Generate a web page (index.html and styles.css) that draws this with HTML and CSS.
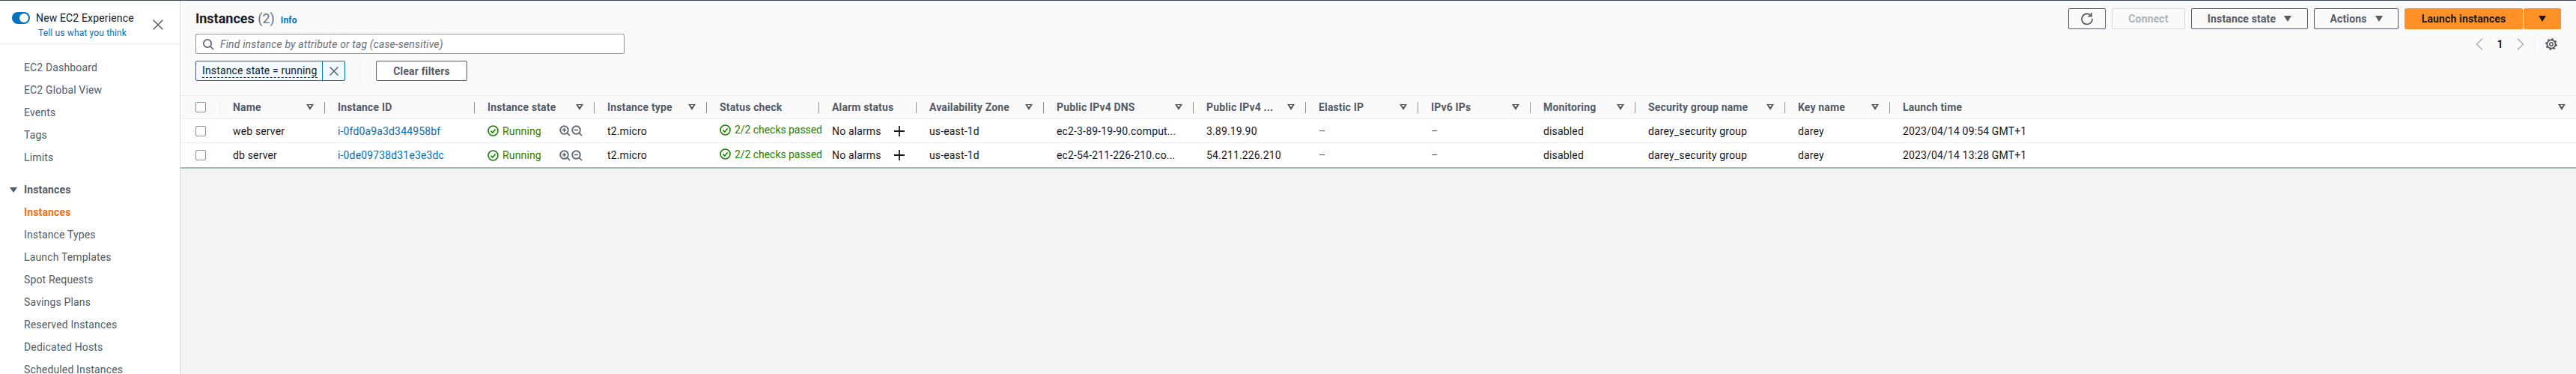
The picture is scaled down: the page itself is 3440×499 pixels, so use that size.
FILE: index.html
```html
<!DOCTYPE html>
<html lang="en">
<head>
    <meta charset="UTF-8">
    <title>Instances | EC2 Management Console</title>
    <link rel="stylesheet" href="styles.css">
</head>
<body>
    <aside class="sidebar">
        <div class="experience">
            <div class="toggle"></div>
            <div class="experience-text">
                <div class="experience-title">New EC2 Experience</div>
                <a class="experience-link">Tell us what you think</a>
            </div>
            <svg class="close" width="14" height="14" viewBox="0 0 14 14"><path d="M0.7 0.7 13.3 13.3M13.3 0.7 0.7 13.3" stroke="#545b64" stroke-width="1.5" fill="none"/></svg>
        </div>
        <ul class="nav nav-top">
            <li>EC2 Dashboard</li>
            <li>EC2 Global View</li>
            <li>Events</li>
            <li>Tags</li>
            <li>Limits</li>
        </ul>
        <div class="nav-heading"><span class="nav-caret"></span>Instances</div>
        <ul class="nav">
            <li class="active">Instances</li>
            <li>Instance Types</li>
            <li>Launch Templates</li>
            <li>Spot Requests</li>
            <li>Savings Plans</li>
            <li>Reserved Instances</li>
            <li>Dedicated Hosts</li>
            <li>Scheduled Instances</li>
        </ul>
    </aside>

    <main class="main">
        <div class="panel-head">
            <div class="head-left">
                <div class="title-row">
                    <h1>Instances <span class="count">(2)</span></h1>
                    <a class="info">Info</a>
                </div>
                <div class="search">
                    <svg width="16" height="16" viewBox="0 0 16 16"><circle cx="7" cy="7" r="5.2" stroke="#545b64" stroke-width="1.6" fill="none"/><path d="M10.8 10.8 15 15" stroke="#545b64" stroke-width="1.6" fill="none"/></svg>
                    <span>Find instance by attribute or tag (case-sensitive)</span>
                </div>
                <div class="filter-row">
                    <div class="chip">
                        <span class="chip-label"><span>Instance state = running</span></span>
                        <span class="chip-x"><svg width="12" height="12" viewBox="0 0 12 12"><path d="M0.6 0.6 11.4 11.4M11.4 0.6 0.6 11.4" stroke="#545b64" stroke-width="1.4" fill="none"/></svg></span>
                    </div>
                    <div class="filter-sep"></div>
                    <button class="btn btn-clear">Clear filters</button>
                </div>
            </div>
            <div class="head-right">
                <div class="toolbar">
                    <button class="btn btn-refresh">
                        <svg width="18" height="18" viewBox="0 0 18 18"><path d="M14.6 5.2A7 7 0 1 0 16 9" stroke="#545b64" stroke-width="1.7" fill="none"/><path d="M15 1v4.6h-4.6" stroke="#545b64" stroke-width="1.7" fill="none"/></svg>
                    </button>
                    <button class="btn btn-connect" disabled>Connect</button>
                    <button class="btn btn-state">Instance state<span class="caret"></span></button>
                    <button class="btn btn-actions">Actions<span class="caret"></span></button>
                    <div class="launch">
                        <button class="btn-launch">Launch instances</button>
                        <button class="btn-launch-caret"><span class="caret caret-dark"></span></button>
                    </div>
                </div>
                <div class="pager">
                    <svg width="10" height="16" viewBox="0 0 10 16"><path d="M9 0.7 1.5 8 9 15.3" stroke="#aab7b8" stroke-width="1.7" fill="none"/></svg>
                    <span class="page-num">1</span>
                    <svg width="10" height="16" viewBox="0 0 10 16"><path d="M1 0.7 8.5 8 1 15.3" stroke="#aab7b8" stroke-width="1.7" fill="none"/></svg>
                    <span class="pager-sep"></span>
                    <svg class="gear" width="16" height="16" viewBox="0 0 16 16"><circle cx="8" cy="8" r="5.6" stroke="#545b64" stroke-width="1.8" fill="none"/><circle cx="8" cy="8" r="7" stroke="#545b64" stroke-width="1.8" stroke-dasharray="2.6 2.9" fill="none"/><circle cx="8" cy="8" r="2.2" stroke="#545b64" stroke-width="1.6" fill="none"/></svg>
                </div>
            </div>
        </div>

        <table class="instances">
            <colgroup>
                <col class="w53"><col class="w140"><col class="w200"><col class="w160"><col class="w150"><col class="w150"><col class="w130"><col class="w170"><col class="w200"><col class="w150"><col class="w150"><col class="w150"><col class="w140"><col class="w200"><col class="w140"><col>
            </colgroup>
            <thead>
                <tr>
                    <th class="check-cell"><div class="check-wrap"><span class="check"></span></div></th>
                    <th><div class="th-in"><span class="th-text">Name</span><span class="sort"></span></div></th>
                    <th><div class="th-in"><span class="th-text">Instance ID</span></div></th>
                    <th><div class="th-in"><span class="th-text">Instance state</span><span class="sort"></span></div></th>
                    <th><div class="th-in"><span class="th-text">Instance type</span><span class="sort"></span></div></th>
                    <th><div class="th-in"><span class="th-text">Status check</span></div></th>
                    <th><div class="th-in"><span class="th-text">Alarm status</span></div></th>
                    <th><div class="th-in"><span class="th-text">Availability Zone</span><span class="sort"></span></div></th>
                    <th><div class="th-in"><span class="th-text">Public IPv4 DNS</span><span class="sort"></span></div></th>
                    <th><div class="th-in"><span class="th-text">Public IPv4 ...</span><span class="sort"></span></div></th>
                    <th><div class="th-in"><span class="th-text">Elastic IP</span><span class="sort"></span></div></th>
                    <th><div class="th-in"><span class="th-text">IPv6 IPs</span><span class="sort"></span></div></th>
                    <th><div class="th-in"><span class="th-text">Monitoring</span><span class="sort"></span></div></th>
                    <th><div class="th-in"><span class="th-text">Security group name</span><span class="sort"></span></div></th>
                    <th><div class="th-in"><span class="th-text">Key name</span><span class="sort"></span></div></th>
                    <th><div class="th-in th-last"><span class="th-text">Launch time</span><span class="sort"></span></div></th>
                </tr>
            </thead>
            <tbody>
                <tr>
                    <td class="check-cell"><span class="check"></span></td>
                    <td>web server</td>
                    <td><a class="link">i-0fd0a9a3d344958bf</a></td>
                    <td>
                        <div class="state">
                            <span class="ok"><svg width="15" height="15" viewBox="0 0 15 15"><circle cx="7.5" cy="7.5" r="6.5" stroke="#1d8102" stroke-width="1.6" fill="none"/><path d="M4.5 7.6 6.8 10 10.6 5.4" stroke="#1d8102" stroke-width="1.6" fill="none"/></svg>Running</span>
                            <span class="zoom-icons">
                                <svg width="15" height="15" viewBox="0 0 15 15"><circle cx="6.5" cy="6.5" r="5.3" stroke="#687078" stroke-width="2" fill="none"/><path d="M4 6.5h5M6.5 4v5M10.5 10.5 14 14" stroke="#545b64" stroke-width="1.6" fill="none"/></svg>
                                <svg width="15" height="15" viewBox="0 0 15 15"><circle cx="6.5" cy="6.5" r="5.3" stroke="#687078" stroke-width="2" fill="none"/><path d="M4 6.5h5M10.5 10.5 14 14" stroke="#545b64" stroke-width="1.6" fill="none"/></svg>
                            </span>
                        </div>
                    </td>
                    <td>t2.micro</td>
                    <td class="tight"><span class="ok"><svg width="15" height="15" viewBox="0 0 15 15"><circle cx="7.5" cy="7.5" r="6.5" stroke="#1d8102" stroke-width="1.6" fill="none"/><path d="M4.5 7.6 6.8 10 10.6 5.4" stroke="#1d8102" stroke-width="1.6" fill="none"/></svg>2/2 checks passed</span></td>
                    <td><div class="alarm">No alarms<svg width="14" height="14" viewBox="0 0 14 14"><path d="M7 0v14M0 7h14" stroke="#16191f" stroke-width="1.8" fill="none"/></svg></div></td>
                    <td>us-east-1d</td>
                    <td>ec2-3-89-19-90.comput...</td>
                    <td>3.89.19.90</td>
                    <td class="muted">–</td>
                    <td class="muted">–</td>
                    <td>disabled</td>
                    <td>darey_security group</td>
                    <td>darey</td>
                    <td>2023/04/14 09:54 GMT+1</td>
                </tr>
                <tr>
                    <td class="check-cell"><span class="check"></span></td>
                    <td>db server</td>
                    <td><a class="link">i-0de09738d31e3e3dc</a></td>
                    <td>
                        <div class="state">
                            <span class="ok"><svg width="15" height="15" viewBox="0 0 15 15"><circle cx="7.5" cy="7.5" r="6.5" stroke="#1d8102" stroke-width="1.6" fill="none"/><path d="M4.5 7.6 6.8 10 10.6 5.4" stroke="#1d8102" stroke-width="1.6" fill="none"/></svg>Running</span>
                            <span class="zoom-icons">
                                <svg width="15" height="15" viewBox="0 0 15 15"><circle cx="6.5" cy="6.5" r="5.3" stroke="#687078" stroke-width="2" fill="none"/><path d="M4 6.5h5M6.5 4v5M10.5 10.5 14 14" stroke="#545b64" stroke-width="1.6" fill="none"/></svg>
                                <svg width="15" height="15" viewBox="0 0 15 15"><circle cx="6.5" cy="6.5" r="5.3" stroke="#687078" stroke-width="2" fill="none"/><path d="M4 6.5h5M10.5 10.5 14 14" stroke="#545b64" stroke-width="1.6" fill="none"/></svg>
                            </span>
                        </div>
                    </td>
                    <td>t2.micro</td>
                    <td class="tight"><span class="ok"><svg width="15" height="15" viewBox="0 0 15 15"><circle cx="7.5" cy="7.5" r="6.5" stroke="#1d8102" stroke-width="1.6" fill="none"/><path d="M4.5 7.6 6.8 10 10.6 5.4" stroke="#1d8102" stroke-width="1.6" fill="none"/></svg>2/2 checks passed</span></td>
                    <td><div class="alarm">No alarms<svg width="14" height="14" viewBox="0 0 14 14"><path d="M7 0v14M0 7h14" stroke="#16191f" stroke-width="1.8" fill="none"/></svg></div></td>
                    <td>us-east-1d</td>
                    <td>ec2-54-211-226-210.co...</td>
                    <td>54.211.226.210</td>
                    <td class="muted">–</td>
                    <td class="muted">–</td>
                    <td>disabled</td>
                    <td>darey_security group</td>
                    <td>darey</td>
                    <td>2023/04/14 13:28 GMT+1</td>
                </tr>
            </tbody>
        </table>
    </main>
</body>
</html>
```

FILE: styles.css
```css
:root {
    --text: #16191f;
    --grey: #545b64;
    --line: #eaeded;
    --blue: #0073bb;
    --green: #1d8102;
    --orange: #ff9126;
}

* {
    box-sizing: border-box;
}

html, body {
    height: 100%;
}

body {
    margin: 0;
    display: flex;
    overflow: hidden;
    font-family: Roboto, "Liberation Sans", sans-serif;
    font-size: 14px;
    letter-spacing: 0.15px;
    color: var(--text);
    background: #f2f3f3;
    border-top: 1px solid #414750;
}

/* sidebar */
.sidebar {
    flex: 0 0 241px;
    background: #fff;
    border-right: 1px solid #d5dbdb;
    overflow: hidden;
}

.experience {
    display: flex;
    height: 58px;
    padding: 15px 0 0 16px;
    border-bottom: 1px solid var(--line);
}

.toggle {
    width: 24px;
    height: 16px;
    border-radius: 8px;
    background: var(--blue);
    position: relative;
    flex: none;
}

.toggle::after {
    content: "";
    position: absolute;
    right: 2px;
    top: 2px;
    width: 12px;
    height: 12px;
    border-radius: 50%;
    background: #fff;
}

.experience-text {
    margin-left: 8px;
    width: 156px;
}

.experience-title {
    line-height: 16px;
    white-space: nowrap;
}

.experience-link {
    display: block;
    margin: 5px 0 0 3px;
    font-size: 12px;
    line-height: 14px;
    color: var(--blue);
    white-space: nowrap;
}

.close {
    margin-top: 10px;
}

.nav {
    list-style: none;
    margin: 0;
    padding: 0;
}

.nav li {
    height: 30px;
    line-height: 30px;
    padding-left: 32px;
    color: var(--grey);
    white-space: nowrap;
}

.nav-top {
    padding-top: 16px;
    padding-bottom: 13px;
}

.nav-heading {
    height: 30px;
    line-height: 30px;
    padding-left: 13px;
    font-weight: 700;
    color: var(--grey);
    display: flex;
    align-items: center;
}

.nav-caret {
    width: 0;
    height: 0;
    border-left: 5px solid transparent;
    border-right: 5px solid transparent;
    border-top: 7px solid var(--grey);
    margin-right: 9px;
}

.nav li.active {
    color: #ec7211;
    font-weight: 700;
}

/* main panel */
.main {
    flex: 1;
    min-width: 0;
}

.panel-head {
    display: flex;
    justify-content: space-between;
    height: 126px;
    padding: 0 20px;
    background: #fafafa;
}

.head-left {
    width: 573px;
}

.title-row {
    display: flex;
    align-items: baseline;
    height: 44px;
    padding-top: 12px;
}

h1 {
    margin: 0;
    font-size: 18px;
    line-height: 24px;
    font-weight: 700;
    letter-spacing: 0;
}

.count {
    font-weight: 400;
    color: #687078;
}

.info {
    margin-left: 8px;
    font-size: 12px;
    font-weight: 700;
    color: var(--blue);
}

.search {
    display: flex;
    align-items: center;
    gap: 8px;
    height: 27px;
    padding-left: 8px;
    background: #fff;
    border: 1px solid #879596;
    border-radius: 2px;
    color: #687078;
    font-style: italic;
}

.filter-row {
    display: flex;
    align-items: center;
    margin-top: 9px;
}

.chip {
    display: flex;
    width: 200px;
    height: 27px;
    background: #f1faff;
    border: 1px solid var(--blue);
    border-radius: 2px;
}

.chip-label {
    flex: 1;
    padding-left: 8px;
    line-height: 24px;
    white-space: nowrap;
}

.chip-label span {
    display: inline-block;
    line-height: 18px;
    border-bottom: 1px dashed var(--text);
}

.chip-x {
    width: 30px;
    display: flex;
    align-items: center;
    justify-content: center;
    border-left: 1px solid var(--blue);
}

.filter-sep {
    width: 1px;
    height: 27px;
    margin: 0 20px;
    background: var(--line);
}

.btn {
    height: 27px;
    padding: 0;
    font-family: inherit;
    font-size: 14px;
    font-weight: 700;
    letter-spacing: inherit;
    color: var(--grey);
    background: #fff;
    border: 1px solid var(--grey);
    border-radius: 2px;
    display: flex;
    align-items: center;
    justify-content: center;
}

.btn-clear {
    width: 122px;
}

.head-right {
    display: flex;
    flex-direction: column;
    align-items: flex-end;
}

.toolbar {
    display: flex;
    gap: 8px;
    padding-top: 10px;
}

.toolbar .btn {
    height: 28px;
    background: #fafafa;
}

.btn-refresh {
    width: 50px;
}

.btn-connect {
    width: 98px;
    color: #aab7b8;
}

.toolbar .btn-connect {
    border-color: #d5dbdb;
}

.btn-state {
    width: 156px;
}

.btn-actions {
    width: 113px;
}

.caret {
    width: 0;
    height: 0;
    margin-left: 11px;
    border-left: 5px solid transparent;
    border-right: 5px solid transparent;
    border-top: 8px solid var(--grey);
}

.caret-dark {
    margin-left: 0;
    border-top-color: var(--text);
}

.launch {
    display: flex;
    gap: 1px;
}

.btn-launch,
.btn-launch-caret {
    height: 28px;
    padding: 0;
    border: 0;
    font-family: inherit;
    font-size: 14px;
    font-weight: 700;
    letter-spacing: inherit;
    color: var(--text);
    background: var(--orange);
    border-radius: 2px;
}

.btn-launch {
    width: 158px;
}

.btn-launch-caret {
    width: 50px;
    display: flex;
    align-items: center;
    justify-content: center;
}

.pager {
    display: flex;
    align-items: center;
    height: 28px;
    margin-top: 6px;
    padding-right: 5px;
}

.page-num {
    width: 45px;
    text-align: center;
    font-weight: 700;
    color: var(--text);
}

.pager-sep {
    width: 1px;
    height: 28px;
    margin: 0 13px 0 14px;
    background: var(--line);
}

/* table */
.instances {
    width: 100%;
    table-layout: fixed;
    border-collapse: separate;
    border-spacing: 0;
    background: #fff;
    border-top: 1px solid var(--line);
    border-bottom: 2px solid #aab7b8;
}

.w53 { width: 53px; }
.w130 { width: 130px; }
.w140 { width: 140px; }
.w150 { width: 150px; }
.w160 { width: 160px; }
.w170 { width: 170px; }
.w200 { width: 200px; }

th {
    height: 31px;
    padding: 0;
    background: #fafafa;
    border-bottom: 1px solid var(--line);
    font-weight: 700;
    text-align: left;
    color: var(--grey);
}

.th-in {
    display: flex;
    align-items: center;
    height: 15px;
    padding: 0 14px 0 17px;
    border-right: 1px solid #879596;
}

.th-last {
    border-right: 0;
}

.th-text {
    flex: 1;
    min-width: 0;
    white-space: nowrap;
}

/* hollow filter triangle */
.sort {
    position: relative;
    width: 0;
    height: 0;
    flex: none;
    margin-left: 4px;
    border-left: 5px solid transparent;
    border-right: 5px solid transparent;
    border-top: 8px solid var(--grey);
}

.sort::after {
    content: "";
    position: absolute;
    left: -2px;
    top: -7px;
    width: 0;
    height: 0;
    border-left: 2px solid transparent;
    border-right: 2px solid transparent;
    border-top: 3px solid #fafafa;
}

.check-cell {
    padding: 0 0 0 20px;
}

.check-wrap {
    display: flex;
    align-items: center;
    height: 15px;
    border-right: 1px solid var(--line);
}

.check {
    display: block;
    width: 14px;
    height: 14px;
    background: #fff;
    border: 1px solid #879596;
    border-radius: 2px;
}

td {
    height: 32px;
    padding: 0 16px 0 17px;
    border-bottom: 1px solid var(--line);
    white-space: nowrap;
}

tbody tr:last-child td {
    border-bottom: 0;
}

.tight {
    padding-right: 0;
    letter-spacing: -0.05px;
}

.link {
    color: var(--blue);
}

.ok {
    display: inline-flex;
    align-items: center;
    gap: 5px;
    color: var(--green);
}

.state,
.alarm {
    display: flex;
    align-items: center;
    justify-content: space-between;
}

.zoom-icons {
    display: flex;
    align-items: center;
    gap: 1px;
}

.muted {
    color: var(--grey);
}
```
